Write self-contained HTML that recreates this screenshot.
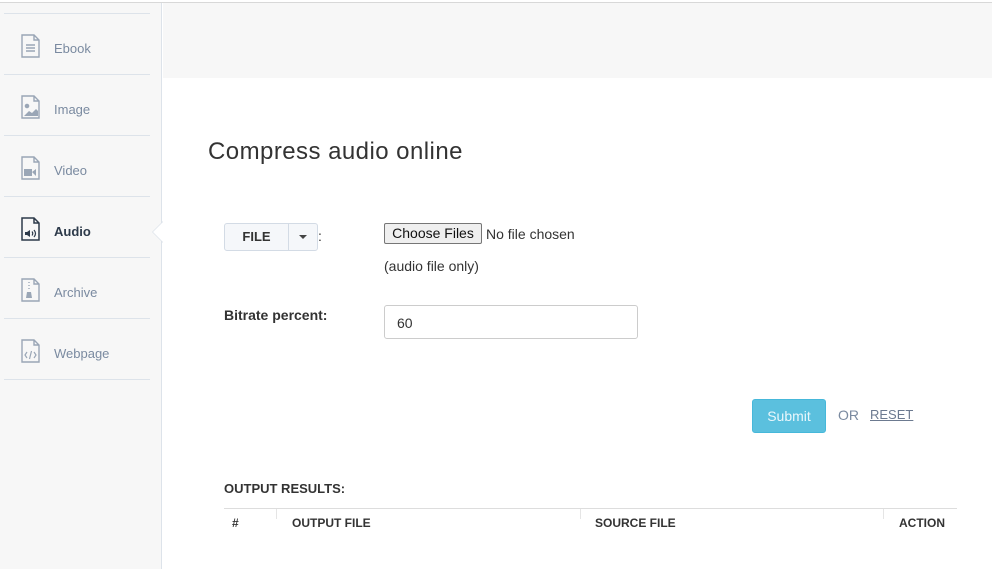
<!DOCTYPE html>
<html><head><meta charset="utf-8"><style>
*{margin:0;padding:0;box-sizing:border-box}
body{width:992px;height:569px;overflow:hidden;background:#fff;font-family:"Liberation Sans",sans-serif;position:relative;color:#333}
.topline{position:absolute;left:0;top:2px;width:992px;height:1px;background:#d8d8d8}
.side{position:absolute;left:0;top:3px;width:162px;height:566px;background:#f7f7f7;border-right:1px solid #dde3ea}
.hdr{position:absolute;left:163px;top:3px;width:829px;height:75px;background:#f7f7f7}
.item{position:absolute;left:4px;width:146px;height:61px;border-top:1px solid #dde3ea;font-size:13px;color:#7a8aa0}
.item span{position:absolute;left:50px;top:27px}
.item svg{position:absolute;left:16px;top:20px}
.item.act{color:#2d3a4a;font-weight:bold}
.arrow{position:absolute;left:152px;top:221px;width:0;height:0;border-top:11px solid transparent;border-bottom:11px solid transparent;border-right:11px solid #dde3ea}
.arrow:after{content:"";position:absolute;left:1px;top:-10px;border-top:10px solid transparent;border-bottom:10px solid transparent;border-right:10px solid #fff}
h1{position:absolute;left:208px;top:138px;font-size:24px;font-weight:normal;color:#333;letter-spacing:0.45px}
.fbtn{position:absolute;left:224px;top:223px;width:94px;height:28px;border:1px solid #d3dbe5;border-radius:3px;background:#f5f7fa;font-size:13px;font-weight:bold;color:#333}
.fbtn .l{position:absolute;left:0;top:0;width:64px;height:26px;line-height:26px;text-align:center;border-right:1px solid #d3dbe5}
.fbtn .c{position:absolute;left:74px;top:11px;border-left:4px solid transparent;border-right:4px solid transparent;border-top:4px solid #444}
.lbl{position:absolute;font-size:14px;color:#333}
.choose{position:absolute;left:384px;top:223px;width:98px;height:21px;border:1px solid #767676;border-radius:2px;background:#efefef;font-size:14px;text-align:center;line-height:19px;color:#111}
.inp{position:absolute;left:384px;top:305px;width:254px;height:34px;border:1px solid #ccc;border-radius:3px;font-size:14px;padding:9px 12px;color:#333}
.sub{position:absolute;left:752px;top:399px;width:74px;height:34px;background:#5bc0de;border:1px solid #46b8da;border-radius:3px;color:#eaf7fc;font-size:14px;text-align:center;line-height:32px}
.th{position:absolute;top:516px;font-size:12px;font-weight:bold;color:#333}
</style></head><body>
<div class="topline"></div>
<div class="side">
<div class="item" style="top:10px"><svg width="22" height="24" viewBox="0 0 22 24" fill="none" stroke="#9aa6b6" stroke-width="1.4"><path d="M2 1h12l5 5v17H2z M14 1v5h5"/><path d="M6 11h9M6 14h9M6 17h9"/></svg><span>Ebook</span></div>
<div class="item" style="top:71px"><svg width="22" height="24" viewBox="0 0 22 24" fill="none" stroke="#9aa6b6" stroke-width="1.4"><path d="M2 1h12l5 5v17H2z M14 1v5h5"/><circle cx="7" cy="11" r="1.6" fill="#9aa6b6"/><path d="M4 21l5-5 3 2 4-4 2 2v5z" fill="#9aa6b6" stroke="none"/></svg><span>Image</span></div>
<div class="item" style="top:132px"><svg width="22" height="24" viewBox="0 0 22 24" fill="none" stroke="#9aa6b6" stroke-width="1.4"><path d="M2 1h12l5 5v17H2z M14 1v5h5"/><path d="M4 13h8v7H4zM12 16l4-3v7z" fill="#9aa6b6" stroke="none"/></svg><span>Video</span></div>
<div class="item act" style="top:193px"><svg width="22" height="24" viewBox="0 0 22 24" fill="none" stroke="#2d3a4a" stroke-width="1.5"><path d="M2 1h12l5 5v17H2z M14 1v5h5"/><path d="M5 15h2l3-2v7l-3-2H5z" fill="#2d3a4a" stroke="none"/><path d="M12 14.5q1.5 2 0 4M14 13q3 3.5 0 7" stroke-width="1.2"/></svg><span>Audio</span></div>
<div class="item" style="top:254px"><svg width="22" height="24" viewBox="0 0 22 24" fill="none" stroke="#9aa6b6" stroke-width="1.4"><path d="M2 1h12l5 5v17H2z M14 1v5h5"/><path d="M9 4v1M9 7v1M9 10v1" /><path d="M7 14h4l1 6H6z" fill="#9aa6b6" stroke="none"/></svg><span>Archive</span></div>
<div class="item" style="top:315px"><svg width="22" height="24" viewBox="0 0 22 24" fill="none" stroke="#9aa6b6" stroke-width="1.4"><path d="M2 1h12l5 5v17H2z M14 1v5h5"/><path d="M7 13l-2 3 2 3M14 13l2 3-2 3M11.5 12l-2 8" stroke-width="1.2"/></svg><span>Webpage</span></div>
<div class="item" style="top:376px;height:1px"></div>
</div>
<div class="arrow"></div>
<div class="hdr"></div>
<h1>Compress audio online</h1>
<div class="fbtn"><div class="l">FILE</div><div class="c"></div></div>
<div class="lbl" style="left:318px;top:228px">:</div>
<div class="choose">Choose Files</div>
<div class="lbl" style="left:486px;top:226px">No file chosen</div>
<div class="lbl" style="left:384px;top:258px">(audio file only)</div>
<div class="lbl" style="left:224px;top:307px;font-weight:bold">Bitrate percent:</div>
<div class="inp">60</div>
<div class="sub">Submit</div>
<div class="lbl" style="left:838px;top:407px;color:#7a8aa0">OR</div>
<div class="lbl" style="left:870px;top:407px;color:#6c7a90;text-decoration:underline;font-size:13px">RESET</div>
<div class="lbl" style="left:224px;top:481px;font-size:13px;font-weight:bold">OUTPUT RESULTS:</div>
<div style="position:absolute;left:224px;top:508px;width:733px;height:1px;background:#ddd"></div>
<div style="position:absolute;left:276px;top:509px;width:1px;height:10px;background:#e5e5e5"></div>
<div style="position:absolute;left:580px;top:509px;width:1px;height:10px;background:#e5e5e5"></div>
<div style="position:absolute;left:883px;top:509px;width:1px;height:10px;background:#e5e5e5"></div>
<div class="th" style="left:232px">#</div>
<div class="th" style="left:292px">OUTPUT FILE</div>
<div class="th" style="left:595px">SOURCE FILE</div>
<div class="th" style="left:899px">ACTION</div>
</body></html>
